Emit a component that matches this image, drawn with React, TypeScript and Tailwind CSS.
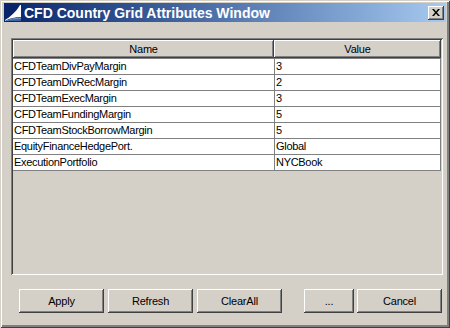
const rows: [string, string][] = [
  ['CFDTeamDivPayMargin', '3'],
  ['CFDTeamDivRecMargin', '2'],
  ['CFDTeamExecMargin', '3'],
  ['CFDTeamFundingMargin', '5'],
  ['CFDTeamStockBorrowMargin', '5'],
  ['EquityFinanceHedgePort.', 'Global'],
  ['ExecutionPortfolio', 'NYCBook'],
]

const raised = 'bg-[#d4d0c8] shadow-[inset_-1px_-1px_#404040,inset_1px_1px_#ffffff,inset_-2px_-2px_#808080]'

function Btn({ label, w }: { label: string; w: string }) {
  return (
    <button className={`${raised} ${w} h-[24px] flex items-center justify-center text-[11px] tracking-[-0.2px] text-black`}>
      {label}
    </button>
  )
}

function TitleIcon() {
  return (
    <svg width="16" height="16" viewBox="0 0 16 16">
      <rect width="16" height="16" fill="#0a246a" />
      <path d="M0 15 C5 12 11 7 15 0 L16 0 L16 12 C10 12 5 13 0 16 Z" fill="#ffffff" />
      <path d="M0 16 C5 13.5 10 12.5 16 12.5 L16 16 Z" fill="#6f8fc7" />
      <path d="M1 16 C5 14.5 10 13.8 16 14 L16 16 Z" fill="#3a62a8" />
    </svg>
  )
}

export default function App() {
  return (
    <div className="w-[450px] h-[328px] bg-[#d4d0c8] flex flex-col pt-[3px] px-[4px] shadow-[inset_1px_1px_#d4d0c8,inset_-1px_-1px_#404040,inset_2px_2px_#ffffff,inset_-2px_-2px_#808080,inset_-3px_-3px_#808080] font-['Liberation_Sans',Arial,sans-serif] select-none">
      <div className="h-[19px] flex items-center bg-linear-to-r from-[#0a246a] to-[#a6caf0]">
        <div className="ml-[1px] w-[16px] h-[16px]">
          <TitleIcon />
        </div>
        <span className="ml-[3px] text-white font-bold text-[14px] leading-none">CFD Country Grid Attributes Window</span>
        <button className={`${raised} ml-auto mr-[2px] w-[16px] h-[14px] flex items-center justify-center`}>
          <svg width="8" height="7" viewBox="0 0 8 7">
            <path d="M0 0h2l2 2.5L6 0h2L5 3.5 8 7H6L4 4.5 2 7H0l3-3.5z" fill="#000" />
          </svg>
        </button>
      </div>

      <div className="mt-[16px] ml-[7px] w-[432px] h-[237px] p-[2px] bg-[#d4d0c8] shadow-[inset_1px_1px_#808080,inset_-1px_-1px_#ffffff,inset_2px_2px_#404040,inset_-2px_-2px_#d4d0c8]">
        <div className="flex h-[18px] text-[11px] tracking-[-0.2px] text-black">
          <div className={`${raised} w-[261px] flex items-center justify-center`}>Name</div>
          <div className={`${raised} flex-1 flex items-center justify-center`}>Value</div>
        </div>
        <div className="border-b border-[#808080]">
          {rows.map(([name, value]) => (
            <div key={name} className="flex h-[16px] border-t border-[#808080] bg-white text-[11px] tracking-[-0.3px] text-black">
              <div className="w-[261px] pl-[1px] flex items-center">{name}</div>
              <div className="flex-1 pl-[1px] flex items-center border-l border-r border-[#808080]">{value}</div>
            </div>
          ))}
        </div>
      </div>

      <div className="mt-[14px] ml-[15px] flex">
        <Btn label="Apply" w="w-[85px]" />
        <div className="ml-[4px]"><Btn label="Refresh" w="w-[85px]" /></div>
        <div className="ml-[4px]"><Btn label="ClearAll" w="w-[85px]" /></div>
        <div className="ml-[22px]"><Btn label="..." w="w-[50px]" /></div>
        <div className="ml-[3px]"><Btn label="Cancel" w="w-[85px]" /></div>
      </div>
    </div>
  )
}
